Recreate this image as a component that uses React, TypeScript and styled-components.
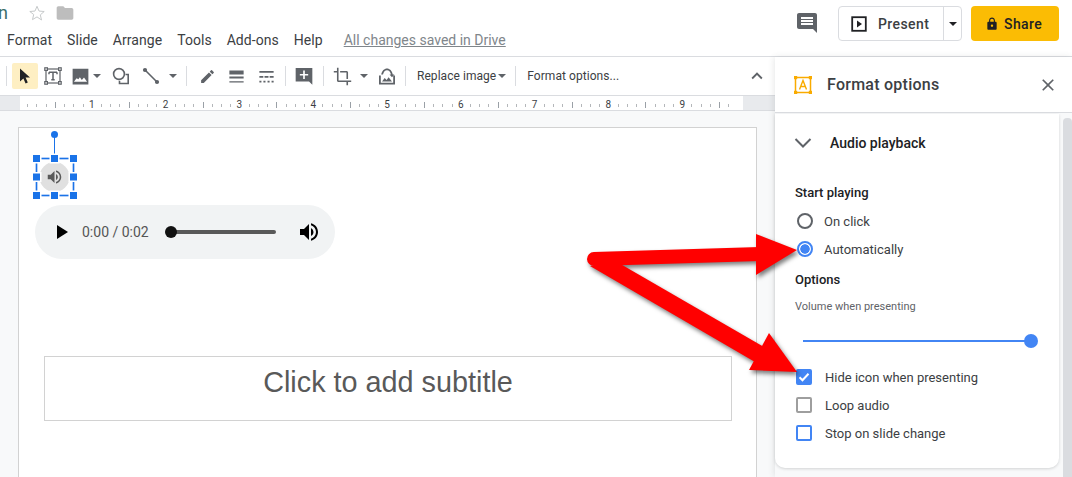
import React from "react"
import styled, {createGlobalStyle} from "styled-components"

const GlobalStyle = createGlobalStyle`
html, body {
  margin: 0;
  padding: 0;
  width: 1072px;
  height: 477px;
  overflow: hidden;
  background: #fff;
  font-family: Roboto, "Liberation Sans", sans-serif;
}
`

const Page = styled.div`
position: relative;
width: 1072px;
height: 477px;
overflow: hidden;
display: flex;
flex-direction: column;
`

//Header
const Header = styled.header`
height: 56px;
flex: none;
display: flex;
justify-content: space-between;
border-bottom: 1px solid #dadce0;
`
const TitleArea = styled.div`
display: flex;
flex-direction: column;
`
const TitleRow = styled.div`
height: 26px;
display: flex;
align-items: center;
gap: 9px;
`
const TitleTail = styled.span`
width: 21px;
margin-left: -2px;
font-size: 18px;
line-height: 26px;
color: #3c6e6a;
`
const MenuRow = styled.div`
display: flex;
align-items: center;
padding-left: 7px;
gap: 15px;
height: 28px;
`
const MenuItem = styled.span`
font-size: 14px;
letter-spacing: 0.05px;
color: #3c4043;
`
const SaveNote = styled.span`
margin-left: 6px;
font-size: 14px;
color: #80868b;
text-decoration: underline;
`
const Actions = styled.div`
display: flex;
align-items: flex-start;
padding: 6px 13px 0 0;
`
const CommentButton = styled.div`
width: 24px;
height: 24px;
margin: 5px 19px 0 0;
`
const PresentGroup = styled.div`
display: flex;
width: 124px;
height: 35px;
box-sizing: border-box;
border: 1px solid #dadce0;
border-radius: 4px;
margin-right: 9px;
`
const PresentMain = styled.div`
width: 105px;
display: flex;
align-items: center;
padding-left: 12px;
gap: 11px;
font-size: 14px;
font-weight: 500;
letter-spacing: 0.4px;
color: #3c4043;
box-sizing: border-box;
border-right: 1px solid #dadce0;
`
const PresentCaret = styled.div`
flex: 1;
display: flex;
align-items: center;
justify-content: center;
`
const Caret = styled.span<{$color?: string}>`
width: 0;
height: 0;
border-left: 4px solid transparent;
border-right: 4px solid transparent;
border-top: 4px solid ${props => props.$color || "#3c4043"};
`
const ShareButton = styled.div`
width: 88px;
height: 35px;
display: flex;
align-items: center;
padding-left: 14px;
box-sizing: border-box;
gap: 5px;
background: #fbbc04;
border-radius: 4px;
font-size: 14px;
font-weight: 500;
letter-spacing: 0.4px;
color: #202124;
`

//Main area
const Body = styled.div`
flex: 1;
display: flex;
min-height: 0;
`
const Editor = styled.div`
width: 775px;
flex: none;
display: flex;
flex-direction: column;
`
const Toolbar = styled.div`
height: 39px;
flex: none;
display: flex;
align-items: center;
padding-left: 6px;
box-sizing: border-box;
border-bottom: 1px solid #dadce0;
`
const Sep = styled.span<{$left: number; $right: number}>`
width: 1px;
height: 20px;
flex: none;
background: #dadce0;
margin: 0 ${props => props.$right}px 0 ${props => props.$left}px;
`
const Tool = styled.div<{$w?: number; $active?: boolean; $ml?: number; $mr?: number}>`
width: ${props => props.$w || 26}px;
height: 26px;
flex: none;
display: flex;
align-items: center;
justify-content: center;
margin-left: ${props => props.$ml || 0}px;
margin-right: ${props => props.$mr || 0}px;
border-radius: 2px;
background: ${props => (props.$active ? "#feefc3" : "transparent")};
`
const ToolText = styled.span`
font-size: 12px;
letter-spacing: 0.05px;
color: #3c4043;
white-space: nowrap;
`
const ToolSpacer = styled.div`
flex: 1;
`
const RulerBar = styled.div`
height: 14px;
flex: none;
background: #fff;
border-bottom: 1px solid #dadce0;
`
const RulerSvg = styled.svg`
display: block;
`
const Canvas = styled.div`
flex: 1;
position: relative;
background: #f8f9fa;
overflow: hidden;
`
const Slide = styled.div`
position: absolute;
left: 18px;
top: 16px;
width: 739px;
height: 400px;
box-sizing: border-box;
background: #fff;
border: 1px solid #d2d2d2;
`
const Selection = styled.svg`
position: absolute;
left: 14px;
top: 1px;
`
const AudioPlayer = styled.div`
position: absolute;
left: 16px;
top: 77px;
width: 300px;
height: 54px;
display: flex;
align-items: center;
border-radius: 27px;
background: #f1f3f4;
box-sizing: border-box;
padding-left: 14px;
`
const PlayerTime = styled.span`
font-size: 14px;
color: #555;
margin: 0 22px 0 9px;
white-space: nowrap;
`
const PlayerTrack = styled.div`
position: relative;
width: 105px;
height: 4px;
border-radius: 2px;
background: #595959;
margin-right: 21px;
`
const PlayerThumb = styled.span`
position: absolute;
left: -6px;
top: -4px;
width: 12px;
height: 12px;
border-radius: 50%;
background: #111;
`
const Placeholder = styled.div`
position: absolute;
left: 25px;
top: 228px;
width: 688px;
height: 65px;
box-sizing: border-box;
display: flex;
align-items: center;
justify-content: center;
padding-bottom: 12px;
border: 1px solid #d2d2d2;
font-family: "Liberation Sans", Arial, sans-serif;
font-size: 28.8px;
color: #595959;
`

//Side panel
const Sidebar = styled.aside`
flex: 1;
display: flex;
flex-direction: column;
background: #f8f9fa;
box-shadow: -1px 0 6px rgba(60, 64, 67, 0.12);
z-index: 1;
`
const SideHeader = styled.div`
height: 56px;
flex: none;
display: flex;
align-items: center;
padding: 0 14px 0 19px;
box-sizing: border-box;
background: #fff;
border-bottom: 1px solid #dadce0;
`
const SideTitle = styled.span`
flex: 1;
margin-left: 15px;
font-size: 16px;
font-weight: 500;
letter-spacing: 0.25px;
color: #3c4043;
`
const SideBody = styled.div`
flex: 1;
display: flex;
min-height: 0;
padding-top: 1px;
`
const Card = styled.div`
width: 284px;
height: 354px;
flex: none;
box-sizing: border-box;
padding: 0 20px;
background: #fff;
border-radius: 0 0 10px 10px;
box-shadow: 0 1px 3px rgba(60, 64, 67, 0.2);
`
const Scrollbar = styled.div`
width: 9px;
margin: 4px 0 0 4px;
background: #dadce0;
border-radius: 4px 4px 0 0;
`
const SectionHead = styled.div`
height: 58px;
display: flex;
align-items: center;
gap: 18px;
margin-left: -1px;
margin-bottom: 13px;
font-size: 14px;
font-weight: 500;
color: #202124;
`
const Label = styled.div<{$mt?: number}>`
margin-top: ${props => props.$mt || 0}px;
font-size: 13px;
font-weight: 500;
line-height: 16px;
color: #202124;
`
const Choice = styled.div<{$mt?: number}>`
height: 28px;
display: flex;
align-items: center;
margin-top: ${props => props.$mt || 0}px;
font-size: 13px;
color: #3c4043;
`
const Radio = styled.span<{$on?: boolean}>`
width: 16px;
height: 16px;
flex: none;
box-sizing: border-box;
margin: 0 11px 0 2px;
border-radius: 50%;
border: 2px solid ${props => (props.$on ? "#4285f4" : "#5f6368")};
background: ${props => (props.$on ? "radial-gradient(circle, #4285f4 0 4.4px, #fff 5px)" : "#fff")};
`
const Hint = styled.div`
margin-top: 11px;
font-size: 11px;
line-height: 16px;
color: #5f6368;
`
const Slider = styled.div`
position: relative;
width: 228px;
height: 2px;
margin: 25px 0 0 8px;
background: #4285f4;
`
const SliderThumb = styled.span`
position: absolute;
right: -7px;
top: -6px;
width: 14px;
height: 14px;
border-radius: 50%;
background: #4285f4;
`
const CheckList = styled.div`
margin-top: 21px;
`
const CheckRow = styled.div`
height: 28px;
display: flex;
align-items: center;
font-size: 13px;
color: #3c4043;
`
const Check = styled.span<{$border: string; $fill?: boolean}>`
width: 16px;
height: 16px;
flex: none;
box-sizing: border-box;
margin: 0 13px 0 1px;
display: flex;
align-items: center;
justify-content: center;
border: 2px solid ${props => props.$border};
border-radius: 2px;
background: ${props => (props.$fill ? props.$border : "#fff")};
`
const ArrowLayer = styled.svg`
position: absolute;
left: 0;
top: 0;
z-index: 2;
pointer-events: none;
filter: drop-shadow(2px 3px 2px rgba(0, 0, 0, 0.5));
`

const DARK = "#5f6368"

const Icon = ({d, size = 18, fill = DARK}: {d: string; size?: number; fill?: string}) => (
  <svg width={size} height={size} viewBox="0 0 24 24" fill={fill}><path fillRule="evenodd" d={d} /></svg>
)

const paths = {
  comment: "M21.99 4c0-1.1-.89-2-1.99-2H4c-1.1 0-2 .9-2 2v12c0 1.1.9 2 2 2h14l4 4-.01-18zM18 14H6v-2h12v2zm0-3H6V9h12v2zm0-3H6V6h12v2z",
  addComment: "M22 2.5H2v16h16l4 4V2.5zM17 11.5h-4v4h-2v-4H7v-2h4v-4h2v4h4v2z",
  image: "M3 3h18v18H3zM7.5 14l-3 4h15l-3.5-5-2.5 3-2.2-3.2L9.6 15z",
  pen: "M3 17.25V21h3.75L17.81 9.94l-3.75-3.75L3 17.25zM20.71 7.04a1 1 0 0 0 0-1.41l-2.34-2.34a1 1 0 0 0-1.41 0l-1.83 1.83 3.75 3.75 1.83-1.83z",
  weight: "M3 4.5h18v5H3zM3 12h18v2.4H3zM3 18h18v1.5H3z",
  dash: "M3 5h18v2.4H3zM3 11.5h5v2H3zM9.5 11.5h5v2h-5zM16 11.5h5v2h-5zM3 17.5h2.6v2H3zM8.1 17.5h2.6v2H8.1zM13.3 17.5h2.6v2h-2.6zM18.4 17.5H21v2h-2.6z",
  crop: "M17 15h2V7c0-1.1-.9-2-2-2H9v2h8v8zM7 17V1H5v4H1v2h4v10c0 1.1.9 2 2 2h10v4h2v-4h4v-2H7z",
  chevronUp: "M12 8l-6 6 1.41 1.41L12 10.83l4.59 4.58L18 14z",
  close: "M19 6.41L17.59 5 12 10.59 6.41 5 5 6.41 10.59 12 5 17.59 6.41 19 12 13.41 17.59 19 19 17.59 13.41 12z",
  lock: "M18 8h-1V6c0-2.76-2.24-5-5-5S7 3.24 7 6v2H6c-1.1 0-2 .9-2 2v10c0 1.1.9 2 2 2h12c1.1 0 2-.9 2-2V10c0-1.1-.9-2-2-2zm-6 9c-1.1 0-2-.9-2-2s.9-2 2-2 2 .9 2 2-.9 2-2 2zm3.1-9H8.9V6c0-1.71 1.39-3.1 3.1-3.1 1.71 0 3.1 1.39 3.1 3.1v2z",
  volume: "M3 9v6h4l5 5V4L7 9H3zm13.5 3A4.5 4.5 0 0 0 14 7.97v8.05c1.48-.73 2.5-2.25 2.5-4.02zM14 3.23v2.06c2.89.86 5 3.54 5 6.71s-2.11 5.85-5 6.71v2.06c4.01-.91 7-4.49 7-8.77s-2.99-7.86-7-8.77z",
  folder: "M10 4H4c-1.1 0-2 .9-2 2v12c0 1.1.9 2 2 2h16c1.1 0 2-.9 2-2V8c0-1.1-.9-2-2-2h-8l-2-2z",
}

const StarIcon = () => (
  <svg width="18" height="18" viewBox="0 0 24 24" fill="none" stroke="#c4c7c9" strokeWidth="1.3">
    <path d="M12 3l2.7 6.4 6.9.6-5.2 4.5 1.6 6.8L12 17.2l-6 3.6 1.6-6.8L2.4 10l6.9-.6z" />
  </svg>
)

const CursorIcon = () => (
  <svg width="18" height="18" viewBox="0 0 18 18" fill="#202124"><path d="M4 1.5v13l3.4-3 2.2 5 2.2-1-2.2-4.9 4.4-.1z" /></svg>
)

const TextBoxIcon = () => (
  <svg width="18" height="18" viewBox="0 0 18 18" fill="none" stroke={DARK} strokeWidth="1.2">
    <rect x="2" y="2" width="14" height="14" />
    <path d="M5 5.2h8M9 5.2v7.6M7.3 12.8h3.4M5 5.2v2M13 5.2v2" strokeWidth="1.5" />
    <g fill="#fff">
      <rect x="0.8" y="0.8" width="2.6" height="2.6" />
      <rect x="14.6" y="0.8" width="2.6" height="2.6" />
      <rect x="0.8" y="14.6" width="2.6" height="2.6" />
      <rect x="14.6" y="14.6" width="2.6" height="2.6" />
    </g>
  </svg>
)

const ShapeIcon = () => (
  <svg width="18" height="18" viewBox="0 0 18 18" fill="none" stroke={DARK} strokeWidth="1.6">
    <circle cx="7" cy="7" r="5.4" />
    <path d="M13.5 7.5h2.7v9H7.5v-2.7" />
  </svg>
)

const LineIcon = () => (
  <svg width="18" height="18" viewBox="0 0 18 18" fill={DARK} stroke={DARK} strokeWidth="1.6">
    <path d="M3 3l12 12" />
    <circle cx="3" cy="3" r="1.3" />
    <circle cx="15" cy="15" r="1.3" />
  </svg>
)

const ReplaceIcon = () => (
  <svg width="18" height="18" viewBox="0 0 18 18" fill={DARK}>
    <path d="M1 8.5v9h16v-9h-1.8v7.3H2.8V8.5z" />
    <path d="M4 14.5l2.7-3.6 1.9 2.2 2-2.8 3.4 4.2z" />
    <path d="M3.2 7.4C4 3.6 6.3 1.4 9 1.4s5 2.2 5.8 6h1.6l-2.4 2.8-2.5-2.8h1.5C12.4 4.8 10.9 3.2 9 3.2S5.6 4.8 5 7.4z" />
  </svg>
)

const PresentIcon = () => (
  <svg width="16" height="16" viewBox="0 0 16 16" fill="none">
    <rect x="1.2" y="1.2" width="13.6" height="13.6" stroke="#202124" strokeWidth="1.8" />
    <path d="M6 4.6v6.8l5-3.4z" fill="#202124" />
  </svg>
)

const FormatIcon = () => (
  <svg width="18" height="18" viewBox="0 0 18 18" fill="none" stroke="#f9ab00">
    <rect x="1.5" y="1.5" width="15" height="15" strokeWidth="1.5" />
    <g fill="#f9ab00" stroke="none">
      <rect x="0" y="0" width="3.2" height="3.2" />
      <rect x="14.8" y="0" width="3.2" height="3.2" />
      <rect x="0" y="14.8" width="3.2" height="3.2" />
      <rect x="14.8" y="14.8" width="3.2" height="3.2" />
    </g>
    <path d="M5.5 13.5l3.5-9 3.5 9M6.7 10.5h4.6" strokeWidth="1.4" />
  </svg>
)

// half inch marks are the tall ones, numbers sit on the inch
const RulerMarks = () => {
  const inch = 73.8
  const zero = 18
  const ticks: React.ReactNode[] = []
  for (let i = 1; i < 78; i++) {
    const x = zero + (i * inch) / 8
    if (x > 738) break
    if (i % 8 === 0) continue
    const tall = i % 4 === 0
    ticks.push(<rect key={i} x={Math.round(x)} y={tall ? 6 : 8} width={1} height={tall ? 6 : 3} fill={tall ? "#9aa0a6" : "#b4b7ba"} />)
  }
  return (
    <RulerSvg width="775" height="14" viewBox="0 0 775 14">
      <rect width="20" height="14" fill="#e8eaed" />
      <rect x="743" width="32" height="14" fill="#e8eaed" />
      {ticks}
      {[1, 2, 3, 4, 5, 6, 7, 8, 9].map(n => (
        <text key={n} x={zero + n * inch} y="11.5" textAnchor="middle" fontSize="10" fontFamily="Roboto, sans-serif" fill="#3c4043">{n}</text>
      ))}
    </RulerSvg>
  )
}

const SelectionFrame = () => {
  const xs = [3.5, 21.5, 40.5]
  const ys = [29.5, 48, 66.5]
  const handles: number[][] = []
  ys.forEach((y, r) => xs.forEach((x, c) => {
    if (r !== 1 || c !== 1) handles.push([x, y])
  }))
  return (
    <Selection width="46" height="72" viewBox="0 0 46 72">
      <circle cx="21.5" cy="48" r="15" fill="#e0e0e0" />
      <g transform="translate(12.5 39) scale(0.75)"><path d={paths.volume} fill="#5a5a5a" /></g>
      <path d="M21.5 5v24" stroke="#1a73e8" strokeWidth="1" />
      <circle cx="21.5" cy="5.5" r="3.5" fill="#1a73e8" />
      <rect x="3.5" y="29.5" width="37" height="37" fill="none" stroke="#b5d0f7" strokeWidth="3" />
      <rect x="3.5" y="29.5" width="37" height="37" fill="none" stroke="#1a73e8" strokeWidth="1" />
      {handles.map(([x, y]) => (
        <g key={`${x}-${y}`}>
          <rect x={x - 5} y={y - 5} width="10" height="10" fill="#fff" />
          <rect x={x - 3.5} y={y - 3.5} width="7" height="7" fill="#1a73e8" />
        </g>
      ))}
    </Selection>
  )
}

const menu = ["Format", "Slide", "Arrange", "Tools", "Add-ons", "Help"]

const App = () => {
  return (
    <Page>
      <GlobalStyle />
      <Header>
        <TitleArea>
          <TitleRow>
            <TitleTail>n</TitleTail>
            <StarIcon />
            <Icon d={paths.folder} size={20} fill="#bdbdbd" />
          </TitleRow>
          <MenuRow>
            {menu.map(item => <MenuItem key={item}>{item}</MenuItem>)}
            <SaveNote>All changes saved in Drive</SaveNote>
          </MenuRow>
        </TitleArea>
        <Actions>
          <CommentButton><Icon d={paths.comment} size={24} fill={DARK} /></CommentButton>
          <PresentGroup>
            <PresentMain><PresentIcon />Present</PresentMain>
            <PresentCaret><Caret $color="#202124" /></PresentCaret>
          </PresentGroup>
          <ShareButton>
            <Icon d={paths.lock} size={14} fill="#202124" />
            Share
          </ShareButton>
        </Actions>
      </Header>
      <Body>
        <Editor>
          <Toolbar>
            <Sep $left={0} $right={5} />
            <Tool $active><CursorIcon /></Tool>
            <Tool $ml={2}><TextBoxIcon /></Tool>
            <Tool $ml={1}><Icon d={paths.image} size={21} /></Tool>
            <Tool $w={8}><Caret $color={DARK} /></Tool>
            <Tool $ml={7}><ShapeIcon /></Tool>
            <Tool $ml={4}><LineIcon /></Tool>
            <Tool $w={10} $ml={4}><Caret $color={DARK} /></Tool>
            <Sep $left={8} $right={7} />
            <Tool><Icon d={paths.pen} size={17} /></Tool>
            <Tool $ml={3}><Icon d={paths.weight} size={19} /></Tool>
            <Tool $ml={4}><Icon d={paths.dash} size={19} /></Tool>
            <Sep $left={6} $right={5} />
            <Tool><Icon d={paths.addComment} size={20} /></Tool>
            <Sep $left={6} $right={5} />
            <Tool><Icon d={paths.crop} size={19} /></Tool>
            <Tool $w={10} $ml={4}><Caret $color={DARK} /></Tool>
            <Tool $ml={5}><ReplaceIcon /></Tool>
            <Sep $left={5} $right={11} />
            <ToolText>Replace image</ToolText>
            <Tool $w={8} $ml={2}><Caret $color={DARK} /></Tool>
            <Sep $left={9} $right={11} />
            <ToolText>Format options...</ToolText>
            <ToolSpacer />
            <Tool $mr={5}><Icon d={paths.chevronUp} size={22} /></Tool>
          </Toolbar>
          <RulerBar><RulerMarks /></RulerBar>
          <Canvas>
            <Slide>
              <SelectionFrame />
              <AudioPlayer>
                <Icon d="M8 5v14l11-7z" size={24} fill="#000" />
                <PlayerTime>0:00 / 0:02</PlayerTime>
                <PlayerTrack><PlayerThumb /></PlayerTrack>
                <Icon d={paths.volume} size={24} fill="#000" />
              </AudioPlayer>
              <Placeholder>Click to add subtitle</Placeholder>
            </Slide>
          </Canvas>
        </Editor>
        <Sidebar>
          <SideHeader>
            <FormatIcon />
            <SideTitle>Format options</SideTitle>
            <Icon d={paths.close} size={20} />
          </SideHeader>
          <SideBody>
            <Card>
              <SectionHead>
                <svg width="18" height="12" viewBox="0 0 18 12" fill="none" stroke={DARK} strokeWidth="2"><path d="M1.5 2l7.5 7.5L16.5 2" /></svg>
                <span>Audio playback</span>
              </SectionHead>
              <Label>Start playing</Label>
              <Choice $mt={6}><Radio />On click</Choice>
              <Choice><Radio $on />Automatically</Choice>
              <Label $mt={9}>Options</Label>
              <Hint>Volume when presenting</Hint>
              <Slider><SliderThumb /></Slider>
              <CheckList>
                <CheckRow>
                  <Check $border="#4285f4" $fill>
                    <svg width="12" height="10" viewBox="0 0 12 10" fill="none" stroke="#fff" strokeWidth="2"><path d="M1.5 5.2l3 3L10.5 1.8" /></svg>
                  </Check>
                  Hide icon when presenting
                </CheckRow>
                <CheckRow><Check $border="#9e9e9e" />Loop audio</CheckRow>
                <CheckRow><Check $border="#4285f4" />Stop on slide change</CheckRow>
              </CheckList>
            </Card>
            <Scrollbar />
          </SideBody>
        </Sidebar>
      </Body>
      <ArrowLayer width="1072" height="477" viewBox="0 0 1072 477">
        <g fill="#ff0000" stroke="#ff0000" strokeLinecap="round">
          <path d="M594 259L760 254" strokeWidth="14" />
          <path d="M617 262L764 347 755 362 590 266z" strokeWidth="0" />
          <path d="M756 234L797 250 756 275z" strokeWidth="0" />
          <path d="M769 333L749 370 797 372z" strokeWidth="0" />
        </g>
      </ArrowLayer>
    </Page>
  )
}

export default App
